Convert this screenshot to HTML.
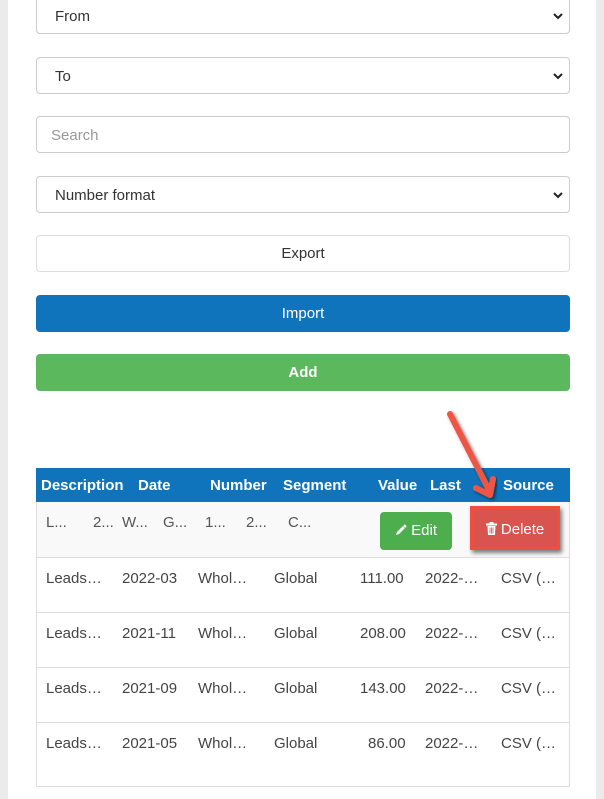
<!DOCTYPE html>
<html><head><style>
*{box-sizing:border-box;margin:0;padding:0}
body{width:604px;height:799px;background:#ebebeb;font-family:"Liberation Sans",Arial,sans-serif;font-size:15px;color:#333;position:relative;overflow:hidden}
.pg{position:absolute;left:8px;top:0;width:588px;height:799px;background:#fff}
.f{position:absolute;left:36px;width:534px;height:37px;border:1px solid #ccc;border-radius:4px;background:#fff;padding:0 18px;line-height:37px;font-size:15px}
.chev{position:absolute;right:6px;top:15px}
.b{position:absolute;left:36px;width:534px;height:37px;border-radius:4px;text-align:center;line-height:38px;font-size:15px}
.t{position:absolute;left:36px;top:468px;width:534px;height:319px;border:1px solid #ddd;border-top:none}
.hd{position:absolute;left:36px;top:468px;width:534px;height:34px;background:#0f74bb;color:#fff;font-weight:bold;font-size:15px}
.hd span,.r span{position:absolute;white-space:nowrap}
.hd span{top:9px}
.r{position:absolute;left:37px;width:532px;border-top:1px solid #ddd;color:#444;font-size:15px}
.r span{top:12px}
</style></head><body>
<div class="pg"></div>
<div class="f" style="top:-3px">From<svg class="chev" width="10" height="7"><polyline points="1,1 5,5 9,1" fill="none" stroke="#222" stroke-width="2"/></svg></div>
<div class="f" style="top:57px">To<svg class="chev" width="10" height="7"><polyline points="1,1 5,5 9,1" fill="none" stroke="#222" stroke-width="2"/></svg></div>
<div class="f" style="top:116px;color:#999;padding-left:14px">Search</div>
<div class="f" style="top:176px">Number format<svg class="chev" width="10" height="7"><polyline points="1,1 5,5 9,1" fill="none" stroke="#222" stroke-width="2"/></svg></div>
<div class="b" style="top:235px;border:1px solid #ddd;background:#fff;color:#333;line-height:36px">Export</div>
<div class="b" style="top:295px;background:#0f74bb;color:#fff">Import</div>
<div class="b" style="top:354px;background:#5cb85c;color:#fff;font-weight:bold">Add</div>
<div class="t"></div>
<div class="hd"><span style="left:5px">Description</span><span style="left:102px">Date</span><span style="left:174px">Number</span><span style="left:247px">Segment</span><span style="left:342px">Value</span><span style="left:394px">Last</span><span style="left:467px">Source</span></div>
<div class="r" style="top:502px;height:56px;background:#f9f9f9;border-top:none;color:#555">
<span style="left:9px">L...</span><span style="left:56px">2...</span><span style="left:85px">W...</span><span style="left:126px">G...</span><span style="left:168px">1...</span><span style="left:209px">2...</span><span style="left:251px">C...</span>
<div style="position:absolute;left:343px;top:10px;width:72px;height:38px;background:#4cae4c;border-radius:4px;color:#fff;font-size:15px;line-height:38px;text-align:center"><svg width="12" height="12" viewBox="0 0 12 12" style="vertical-align:-1px"><path d="M1 11 L2 8 L8 2 L10 4 L4 10 Z" fill="#fff"/><path d="M9 1 L11 3" stroke="#fff" stroke-width="2"/></svg> Edit</div>
<div style="position:absolute;left:433px;top:4px;width:90px;height:44px;border:3px solid #f04e3e;background:#d9534f;color:#fff;font-size:15px;line-height:42px;text-align:center;box-shadow:2px 3px 4px rgba(0,0,0,.5)"><svg width="11" height="13" viewBox="0 0 11 13" style="vertical-align:-1px"><rect x="0" y="1.5" width="11" height="2" fill="#fff"/><rect x="3.5" y="0" width="4" height="2" fill="#fff"/><path d="M1.5 4 H9.5 L9 13 H2 Z" fill="#fff"/><path d="M4 5.5V11.5M5.5 5.5V11.5M7 5.5V11.5" stroke="#d9534f" stroke-width="0.8"/></svg> Delete</div>
</div>
<div class="r" style="top:557px;height:55px"><span style="left:9px">Leads…</span><span style="left:85px">2022-03</span><span style="left:161px">Whol…</span><span style="left:237px">Global</span><span style="left:323px">111.00</span><span style="left:388px">2022-…</span><span style="left:464px">CSV (…</span></div>
<div class="r" style="top:612px;height:55px"><span style="left:9px">Leads…</span><span style="left:85px">2021-11</span><span style="left:161px">Whol…</span><span style="left:237px">Global</span><span style="left:323px">208.00</span><span style="left:388px">2022-…</span><span style="left:464px">CSV (…</span></div>
<div class="r" style="top:667px;height:55px"><span style="left:9px">Leads…</span><span style="left:85px">2021-09</span><span style="left:161px">Whol…</span><span style="left:237px">Global</span><span style="left:323px">143.00</span><span style="left:388px">2022-…</span><span style="left:464px">CSV (…</span></div>
<div class="r" style="top:722px;height:64px"><span style="left:9px">Leads…</span><span style="left:85px">2021-05</span><span style="left:161px">Whol…</span><span style="left:237px">Global</span><span style="left:331px">86.00</span><span style="left:388px">2022-…</span><span style="left:464px">CSV (…</span></div>
<svg style="position:absolute;left:0;top:0" width="604" height="799">
<defs><filter id="s"><feDropShadow dx="2" dy="2" stdDeviation="1.5" flood-opacity=".5"/></filter></defs>
<g filter="url(#s)" stroke="#ef5545" stroke-linecap="round" fill="none">
<line x1="450" y1="414" x2="488" y2="488" stroke-width="6"/>
<polyline points="476,488 490,495 493,479" stroke-width="6" stroke-linejoin="round"/>
</g>
</svg>
</body></html>
